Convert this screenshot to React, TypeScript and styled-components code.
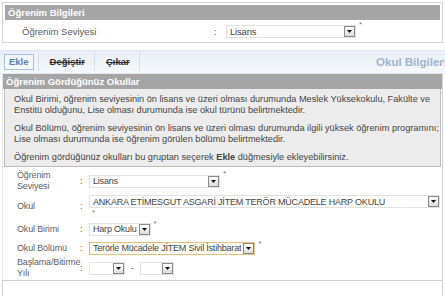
import React from 'react'
import styled, { createGlobalStyle } from 'styled-components'

const GlobalStyle = createGlobalStyle`
  html, body {
    margin: 0;
    padding: 0;
    background: #fff;
  }
  body {
    font-family: 'Liberation Sans', Arial, sans-serif;
    font-size: 9px;
    color: #333;
  }
`

const Page = styled.div`
  width: 445px;
  height: 296px;
  overflow: hidden;
  padding-top: 2px;
`

const Panel = styled.div`
  margin: 0 2px;
  border: 1px solid #d4d4d4;
  padding: 2px 2px 0;
`

const SectionHeader = styled.div`
  height: 15px;
  line-height: 15px;
  background: #a5a5a5;
  color: #fff;
  font-weight: bold;
  font-size: 9.5px;
  padding-left: 3px;
`

const TopRow = styled.div`
  display: flex;
  align-items: center;
  height: 22px;
  padding-left: 17px;
  color: #5a5a5a;
  font-size: 9.5px;
`

const TopLabel = styled.div`
  width: 192px;
`

const Colon = styled.span<{ w?: number }>`
  width: ${(p) => p.w ?? 10}px;
  flex-shrink: 0;
  color: #555;
`

const Toolbar = styled.div`
  display: flex;
  align-items: center;
  height: 22px;
  margin-top: 7px;
  background: linear-gradient(#e9eff6, #f5f8fb);
  border-top: 1px solid #dbe4ee;
  border-bottom: 1px solid #e3e9f0;
  padding-left: 4px;
  overflow: hidden;
`

const ToolButton = styled.div<{ active?: boolean; disabled?: boolean }>`
  height: 14px;
  line-height: 14px;
  padding: 0 4px;
  margin-right: 4px;
  font-weight: bold;
  font-size: 9.5px;
  color: ${(p) => (p.active ? '#5a7fb5' : '#2f2f2f')};
  text-decoration: ${(p) => (p.disabled ? 'line-through' : 'none')};
  border: 1px solid ${(p) => (p.active ? '#a9bfd8' : 'transparent')};
  background: ${(p) => (p.active ? '#f3f7fc' : 'transparent')};
`

const ToolSep = styled.div`
  width: 1px;
  height: 18px;
  background: #d5dfea;
  margin-right: 6px;
`

const ToolTitle = styled.div`
  margin-left: auto;
  font-weight: bold;
  font-size: 11.5px;
  color: #9fb4cc;
  white-space: nowrap;
  margin-right: -2px;
`

const SchoolPanel = styled.div`
  margin: 0 2px;
  border-right: 1px solid #d4d4d4;
  border-left: 1px solid #e8e8e8;
`

const InfoBox = styled.div`
  margin: 0 1px;
  background: #ececec;
  border: 1px solid #bdbdbd;
  border-top: none;
  padding: 5px 0 3px 9px;
  color: #444;
  font-size: 9.2px;
  line-height: 11px;
  white-space: nowrap;
`

const Para = styled.p`
  margin: 0 0 7px;
  &:last-child {
    margin-bottom: 0;
  }
`

const Form = styled.div`
  padding: 2px 0 1px 14px;
`

const Row = styled.div<{ h: number }>`
  display: flex;
  align-items: center;
  min-height: ${(p) => p.h}px;
  color: #5f5f5f;
`

const Label = styled.div`
  width: 63px;
  line-height: 11px;
  white-space: nowrap;
  letter-spacing: -0.15px;
`

const FieldCol = styled.div`
  display: flex;
  flex-direction: column;
`

const FieldLine = styled.div`
  display: flex;
  align-items: center;
`

const SelectBox = styled.div<{ w?: number; focus?: boolean }>`
  display: flex;
  align-items: center;
  gap: 2px;
  width: ${(p) => (p.w ? `${p.w}px` : 'auto')};
  height: 13px;
  border: 1px solid ${(p) => (p.focus ? '#e6c37a' : '#e2e2e2')};
  background: ${(p) => (p.focus ? '#fffdf6' : '#fff')};
  padding-left: 3px;
  box-sizing: border-box;
  color: #444;
  white-space: nowrap;
  letter-spacing: -0.2px;
`

const SelectText = styled.span`
  flex: 1;
  overflow: hidden;
`

const DropBtn = styled.span`
  width: 11px;
  height: 11px;
  box-sizing: border-box;
  border: 1px solid #8a8a8a;
  background: linear-gradient(#fdfdfd, #dcdcdc);
  display: flex;
  align-items: center;
  justify-content: center;
  flex-shrink: 0;
`

const Star = styled.span`
  color: #777;
  margin-left: 3px;
  font-size: 8px;
  align-self: flex-start;
`

const Dash = styled.span`
  margin: 0 6px;
  color: #555;
`

const BottomBox = styled.div`
  margin: 0 2px;
  border: 1px solid #cfcfcf;
  height: 40px;
`

const Arrow = () => (
  <svg width="5" height="3" viewBox="0 0 5 3">
    <path d="M0 0 L5 0 L2.5 3 Z" fill="#111" />
  </svg>
)

const Select = ({ w, text, focus }: { w?: number; text?: string; focus?: boolean }) => (
  <SelectBox w={w} focus={focus}>
    <SelectText>{text}</SelectText>
    <DropBtn>
      <Arrow />
    </DropBtn>
  </SelectBox>
)

export default function App() {
  return (
    <Page>
      <GlobalStyle />
      <Panel>
        <SectionHeader>Öğrenim Bilgileri</SectionHeader>
        <TopRow>
          <TopLabel>Öğrenim Seviyesi</TopLabel>
          <Colon w={12}>:</Colon>
          <Select w={130} text="Lisans" />
          <Star>*</Star>
        </TopRow>
      </Panel>

      <Toolbar>
        <ToolButton active>Ekle</ToolButton>
        <ToolSep />
        <ToolButton disabled>Değiştir</ToolButton>
        <ToolSep />
        <ToolButton disabled>Çıkar</ToolButton>
        <ToolSep />
        <ToolTitle>Okul Bilgileri</ToolTitle>
      </Toolbar>

      <SchoolPanel>
        <SectionHeader>Öğrenim Gördüğünüz Okullar</SectionHeader>
        <InfoBox>
          <Para>
            Okul Birimi, öğrenim seviyesinin ön lisans ve üzeri olması durumunda Meslek Yüksekokulu, Fakülte ve
            <br />
            Enstitü olduğunu, Lise olması durumunda ise okul türünü belirtmektedir.
          </Para>
          <Para>
            Okul Bölümü, öğrenim seviyesinin ön lisans ve üzeri olması durumunda ilgili yüksek öğrenim programını;
            <br />
            Lise olması durumunda ise öğrenim görülen bölümü belirtmektedir.
          </Para>
          <Para>
            Öğrenim gördüğünüz okulları bu gruptan seçerek <b>Ekle</b> düğmesiyle ekleyebilirsiniz.
          </Para>
        </InfoBox>

        <Form>
          <Row h={24}>
            <Label>
              Öğrenim
              <br />
              Seviyesi
            </Label>
            <Colon w={9}>:</Colon>
            <Select w={131} text="Lisans" />
            <Star>*</Star>
          </Row>
          <Row h={26}>
            <Label>Okul</Label>
            <Colon w={9}>:</Colon>
            <FieldCol>
              <Select w={351} text="ANKARA ETİMESGUT ASGARİ JİTEM TERÖR MÜCADELE HARP OKULU" />
              <Star>*</Star>
            </FieldCol>
          </Row>
          <Row h={20}>
            <Label>Okul Birimi</Label>
            <Colon w={9}>:</Colon>
            <Select text="Harp Okulu" />
            <Star>*</Star>
          </Row>
          <Row h={18}>
            <Label>Okul Bölümü</Label>
            <Colon w={9}>:</Colon>
            <Select text="Terörle Mücadele JİTEM Sivil İstihbarat" focus />
            <Star>*</Star>
          </Row>
          <Row h={22}>
            <Label>
              Başlama/Bitirme
              <br />
              Yılı
            </Label>
            <Colon w={9}>:</Colon>
            <FieldLine>
              <Select w={36} />
              <Dash>-</Dash>
              <Select w={34} />
            </FieldLine>
          </Row>
        </Form>
      </SchoolPanel>
      <BottomBox />
    </Page>
  )
}
